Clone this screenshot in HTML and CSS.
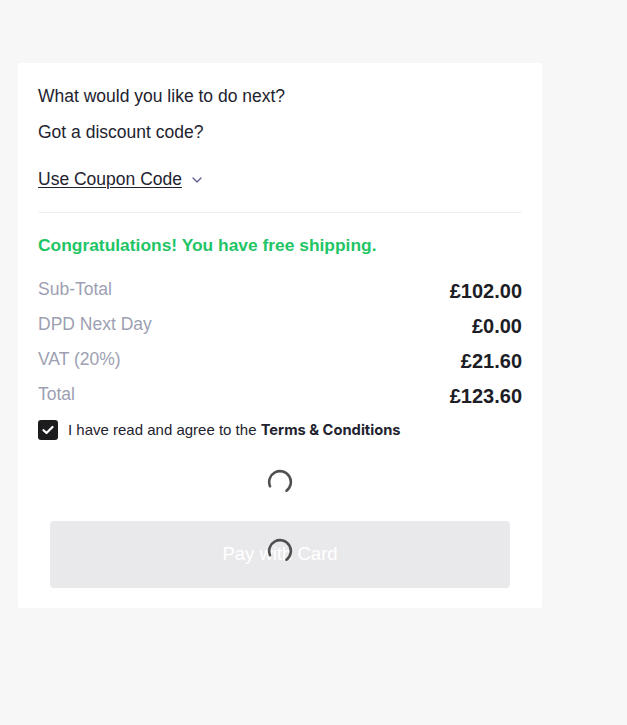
FILE: index.html
```html
<!DOCTYPE html>
<html lang="en">
<head>
  <meta charset="UTF-8">
  <title>Checkout</title>
  <link rel="stylesheet" href="styles.css">
</head>
<body>

  <div class="card">
    <p class="question">What would you like to do next?</p>
    <p class="question second">Got a discount code?</p>

    <!-- Coupon toggle -->
    <div class="coupon">
      <a href="#" class="coupon-link">Use Coupon Code</a>
      <svg class="chevron" width="10" height="6" viewBox="0 0 10 6">
        <path d="M1 1 L5 5 L9 1" fill="none" stroke="#5e5a96" stroke-width="1.3" stroke-linecap="round" stroke-linejoin="round"/>
      </svg>
    </div>

    <hr class="divider">

    <p class="shipping">Congratulations! You have free shipping.</p>

    <!-- Totals -->
    <div class="totals">
      <div class="row"><span class="label">Sub-Total</span><span class="value">£102.00</span></div>
      <div class="row"><span class="label">DPD Next Day</span><span class="value">£0.00</span></div>
      <div class="row"><span class="label">VAT (20%)</span><span class="value">£21.60</span></div>
      <div class="row"><span class="label">Total</span><span class="value">£123.60</span></div>
    </div>

    <label class="terms">
      <span class="checkbox">
        <svg width="12" height="10" viewBox="0 0 12 10">
          <path d="M1.5 5.2 L4.5 8 L10.5 2" fill="none" stroke="#fff" stroke-width="2.2" stroke-linecap="round" stroke-linejoin="round"/>
        </svg>
      </span>
      <span>I have read and agree to the <strong>Terms &amp; Conditions</strong></span>
    </label>

    <div class="spinner-wrap">
      <svg class="spinner" width="26" height="26" viewBox="0 0 24 24">
        <path d="M2.8 15.9 A10 10 0 1 1 18 20" fill="none" stroke="#4f4f4f" stroke-width="2.4" stroke-linecap="round"/>
      </svg>
    </div>

    <!-- Payment button, still loading -->
    <button class="pay" disabled>
      Pay with Card
      <svg class="spinner overlay" width="26" height="26" viewBox="0 0 24 24">
        <path d="M2.8 15.9 A10 10 0 1 1 18 20" fill="none" stroke="#4f4f4f" stroke-width="2.4" stroke-linecap="round"/>
      </svg>
    </button>
  </div>

</body>
</html>
```

FILE: styles.css
```css
/* Page background */
body {
  font-family: "Liberation Sans", Arial, sans-serif;
  background-color: #f7f7f7;
  margin: 0;
  padding: 63px 0 0 18px;
  color: #23232f;
}

/* White panel */
.card {
  width: 484px;
  background-color: #fff;
  padding: 20px;
  border-radius: 3px;
}

.question {
  margin: 0;
  font-size: 17.5px;
  line-height: 26px;
}

.question.second {
  margin-top: 10px;
}

/* Coupon toggle */
.coupon {
  margin-top: 21px;
  display: flex;
  align-items: center;
  gap: 10px;
  line-height: 26px;
}

.coupon-link {
  font-size: 17.5px;
  color: #23232f;
  text-decoration: underline;
  text-underline-offset: 2px;
  text-decoration-thickness: 1px;
}

.chevron {
  margin-top: 2px;
}

.divider {
  margin: 20px 0 0;
  border: none;
  border-top: 1px solid #efeff2;
}

/* Free shipping message */
.shipping {
  margin: 19px 0 0;
  font-size: 17.4px;
  line-height: 26px;
  font-weight: bold;
  color: #1fc565;
}

.totals {
  margin-top: 13px;
}

.row {
  display: flex;
  justify-content: space-between;
  align-items: baseline;
  height: 35px;
  line-height: 35px;
}

.label {
  font-size: 17.5px;
  color: #9d9fb2;
}

.value {
  font-size: 20px;
  font-weight: bold;
  color: #1d1d26;
  position: relative;
  top: 3px;
}

/* Terms checkbox */
.terms {
  margin-top: 9px;
  display: flex;
  align-items: center;
  gap: 10px;
  font-size: 15px;
  color: #23232f;
}

.terms strong {
  font-family: Inter, "Liberation Sans", sans-serif;
  font-weight: 700;
  font-size: 14.7px;
}

.checkbox {
  width: 20px;
  height: 20px;
  border-radius: 3px;
  background-color: #1c1c1e;
  display: flex;
  align-items: center;
  justify-content: center;
}

.spinner-wrap {
  margin-top: 29px;
  display: flex;
  justify-content: center;
}

/* Pay button */
.pay {
  position: relative;
  display: block;
  margin: 26px 0 0 12px;
  width: 460px;
  height: 67px;
  border: none;
  border-radius: 4px;
  background-color: #e9e9eb;
  color: #fff;
  font-family: "Liberation Sans", Arial, sans-serif;
  font-size: 18.5px;
  padding-bottom: 2px;
}

.spinner.overlay {
  position: absolute;
  left: 217px;
  top: 17px;
}
```
